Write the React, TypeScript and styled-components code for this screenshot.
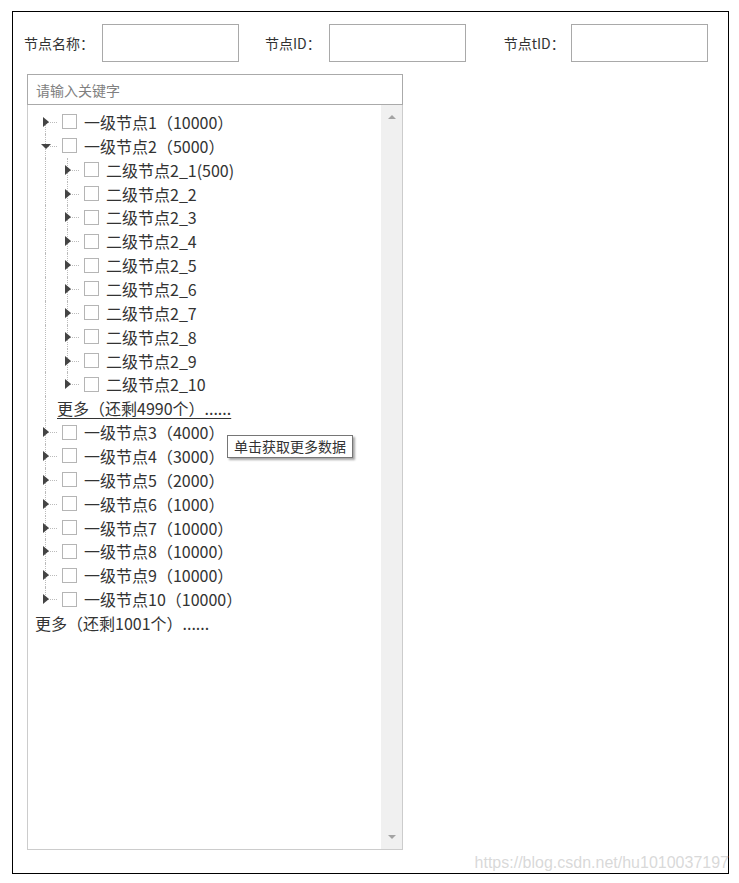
import React from 'react'
import styled, { createGlobalStyle } from 'styled-components'

const GlobalStyle = createGlobalStyle`
  html, body {
    margin: 0;
    padding: 0;
    background: #fff;
  }
  body {
    font-family: "Noto Sans CJK SC", "Microsoft YaHei", sans-serif;
    color: #333;
  }
`

const ROW_H = 23.86
const INDENT = 22

const Page = styled.div`
  position: relative;
  box-sizing: border-box;
  width: 717px;
  height: 863px;
  margin: 11px 0 0 12px;
  border: 1px solid #000;
  padding: 12px 0 0 11px;
`

const FilterBar = styled.div`
  display: flex;
  align-items: center;
  height: 38px;
`

const Field = styled.div<{ offset: number }>`
  display: flex;
  align-items: center;
  margin-left: ${p => p.offset}px;
`

const Label = styled.span<{ gap?: number }>`
  font-size: 14px;
  color: #333;
  white-space: nowrap;
  margin-right: ${p => p.gap ?? 8}px;
`

const TextInput = styled.input`
  box-sizing: border-box;
  width: 137px;
  height: 38px;
  border: 1px solid #a9a9a9;
  outline: none;
  padding: 0 6px;
`

const Panel = styled.div`
  position: relative;
  display: flex;
  flex-direction: column;
  width: 376px;
  margin: 12px 0 0 3px;
`

const SearchInput = styled.input`
  box-sizing: border-box;
  width: 100%;
  height: 31px;
  border: 1px solid #aaa;
  outline: none;
  padding: 0 8px;
  font-family: "Noto Sans CJK SC", sans-serif;
  font-size: 14px;
  color: #333;
  &::placeholder {
    color: #808080;
  }
`

const TreeBox = styled.div`
  box-sizing: border-box;
  display: flex;
  height: 745px;
  border: 1px solid #ccc;
  border-top: none;
`

const TreeList = styled.div`
  flex: 1;
  padding: 5px 0 0 7px;
`

const Row = styled.div`
  display: flex;
  align-items: center;
  height: ${ROW_H}px;
  font-size: 16px;
  color: #333;
  white-space: nowrap;
`

// a spacer column that carries an ancestor's dotted line
const Indent = styled.span<{ line?: boolean }>`
  position: relative;
  flex: none;
  width: ${INDENT}px;
  height: 100%;
  &::before {
    content: '';
    display: ${p => (p.line ? 'block' : 'none')};
    position: absolute;
    left: 10px;
    top: 0;
    bottom: 0;
    border-left: 1px dotted #bbb;
  }
`

type LinePos = 'first' | 'mid' | 'last'

const Switch = styled.span<{ pos: LinePos }>`
  position: relative;
  flex: none;
  width: ${INDENT}px;
  height: 100%;
  &::before {
    content: '';
    position: absolute;
    left: 10px;
    top: ${p => (p.pos === 'first' ? '50%' : '0')};
    bottom: ${p => (p.pos === 'last' ? '50%' : '0')};
    border-left: 1px dotted #bbb;
  }
  &::after {
    content: '';
    position: absolute;
    left: 13px;
    right: 0;
    top: 50%;
    border-top: 1px dotted #bbb;
  }
`

const Caret = styled.span<{ open?: boolean }>`
  position: absolute;
  z-index: 1;
  top: 50%;
  width: 0;
  height: 0;
  ${p =>
    p.open
      ? `
    left: 6px;
    margin-top: -2px;
    border-left: 5px solid transparent;
    border-right: 5px solid transparent;
    border-top: 5px solid #444;
  `
      : `
    left: 8px;
    margin-top: -5px;
    border-top: 5px solid transparent;
    border-bottom: 5px solid transparent;
    border-left: 6px solid #444;
  `}
`

const Check = styled.span`
  box-sizing: border-box;
  flex: none;
  width: 15px;
  height: 15px;
  margin-left: 5px;
  border: 1px solid #b5b5b5;
  background: #fff;
`

const NodeName = styled.span`
  margin-left: 7px;
`

const More = styled.span<{ link?: boolean }>`
  text-decoration: ${p => (p.link ? 'underline' : 'none')};
  text-underline-offset: 3px;
  cursor: pointer;
`

const ScrollBar = styled.div`
  display: flex;
  flex-direction: column;
  width: 21px;
  background: #f0f0f0;
`

const ScrollButton = styled.div`
  display: flex;
  align-items: center;
  justify-content: center;
  height: 24px;
`

const Arrow = styled.span<{ down?: boolean }>`
  width: 0;
  height: 0;
  border-left: 4px solid transparent;
  border-right: 4px solid transparent;
  ${p => (p.down ? 'border-top: 4px solid #a3a3a3;' : 'border-bottom: 4px solid #a3a3a3;')}
`

const Track = styled.div`
  flex: 1;
`

const Tooltip = styled.div`
  position: absolute;
  left: 200px;
  top: 361px;
  box-sizing: border-box;
  height: 23px;
  padding: 0 6px;
  border: 1px solid #767676;
  background: #fff;
  box-shadow: 2px 2px 2px rgba(0, 0, 0, 0.35);
  font-size: 14px;
  line-height: 21px;
  color: #333;
  white-space: nowrap;
`

const Watermark = styled.div`
  position: absolute;
  right: -1px;
  bottom: 0;
  font-family: "Liberation Sans", Arial, sans-serif;
  font-size: 16px;
  line-height: 20px;
  color: rgba(200, 200, 200, 0.7);
  white-space: nowrap;
`

type Node = { label: string; open?: boolean; children?: string[]; more?: string }

const children2 = ['二级节点2_1(500)'].concat(
  Array.from({ length: 9 }, (_, i) => `二级节点2_${i + 2}`)
)

const roots: Node[] = [
  { label: '一级节点1（10000）' },
  { label: '一级节点2（5000）', open: true, children: children2, more: '更多（还剩4990个）......' },
  { label: '一级节点3（4000）' },
  { label: '一级节点4（3000）' },
  { label: '一级节点5（2000）' },
  { label: '一级节点6（1000）' },
  { label: '一级节点7（10000）' },
  { label: '一级节点8（10000）' },
  { label: '一级节点9（10000）' },
  { label: '一级节点10（10000）' },
]

function TreeRow({ label, pos, open, lines }: { label: string; pos: LinePos; open?: boolean; lines: boolean[] }) {
  return (
    <Row>
      {lines.map((l, i) => (
        <Indent key={i} line={l} />
      ))}
      <Switch pos={pos}>
        <Caret open={open} />
      </Switch>
      <Check />
      <NodeName>{label}</NodeName>
    </Row>
  )
}

export default function App() {
  return (
    <>
      <GlobalStyle />
      <Page>
        <FilterBar>
          <Field offset={0}>
            <Label>节点名称：</Label>
            <TextInput />
          </Field>
          <Field offset={26}>
            <Label>节点ID：</Label>
            <TextInput />
          </Field>
          <Field offset={38}>
            <Label gap={6}>节点tID：</Label>
            <TextInput />
          </Field>
        </FilterBar>

        <Panel>
          <SearchInput placeholder="请输入关键字" />
          <TreeBox>
            <TreeList>
              {roots.map((n, i) => {
                const pos: LinePos = i === 0 ? 'first' : i === roots.length - 1 ? 'last' : 'mid'
                const isLast = i === roots.length - 1
                return (
                  <React.Fragment key={n.label}>
                    <TreeRow label={n.label} pos={pos} open={n.open} lines={[]} />
                    {n.open &&
                      n.children?.map((c, j) => (
                        <TreeRow
                          key={c}
                          label={c}
                          pos={j === n.children!.length - 1 ? 'last' : 'mid'}
                          lines={[!isLast]}
                        />
                      ))}
                    {n.open && n.more && (
                      <Row>
                        <Indent line={!isLast} />
                        <More link>{n.more}</More>
                      </Row>
                    )}
                  </React.Fragment>
                )
              })}
              <Row>
                <More>更多（还剩1001个）......</More>
              </Row>
            </TreeList>
            <ScrollBar>
              <ScrollButton>
                <Arrow />
              </ScrollButton>
              <Track />
              <ScrollButton>
                <Arrow down />
              </ScrollButton>
            </ScrollBar>
          </TreeBox>
          <Tooltip>单击获取更多数据</Tooltip>
        </Panel>

        <Watermark>https://blog.csdn.net/hu1010037197</Watermark>
      </Page>
    </>
  )
}
